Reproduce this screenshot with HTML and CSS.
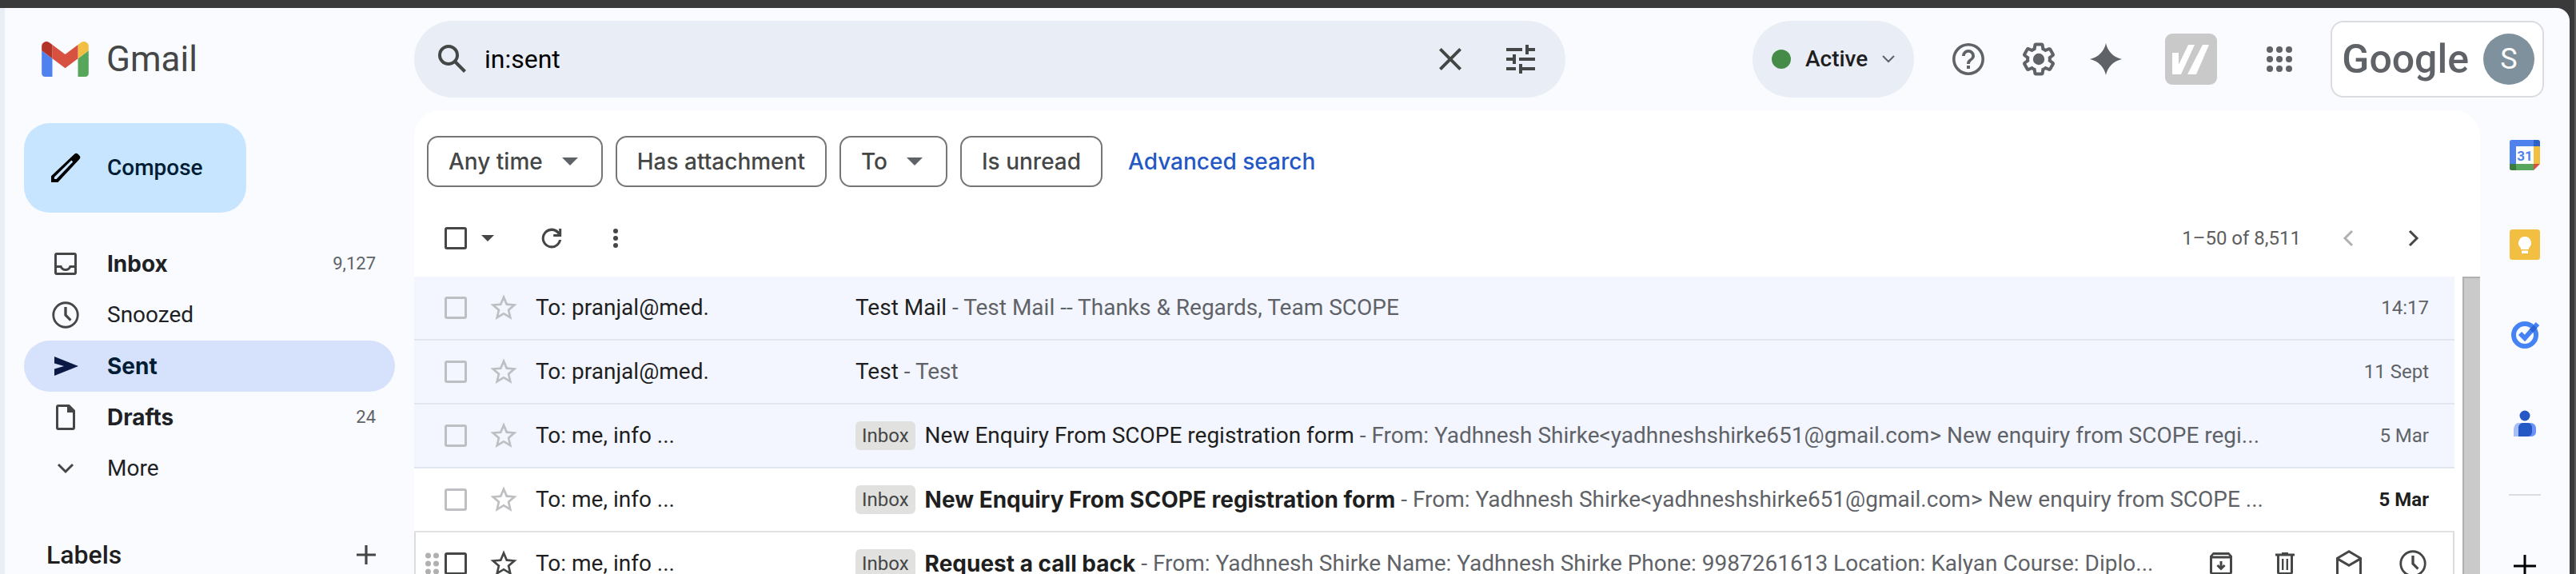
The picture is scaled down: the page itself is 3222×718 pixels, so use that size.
FILE: index.html
```html
<!DOCTYPE html>
<html lang="en">
<head>
<meta charset="utf-8">
<title>Gmail – Sent</title>
<link rel="stylesheet" href="styles.css">
</head>
<body>
<svg class="sprite" aria-hidden="true">
  <symbol id="star" viewBox="0 0 24 24"><path d="M22 9.24l-7.19-.62L12 2 9.19 8.63 2 9.24l5.46 4.73L5.82 21 12 17.27 18.18 21l-1.63-7.03L22 9.24zM12 15.4l-3.76 2.27 1-4.28-3.32-2.88 4.38-.38L12 6.1l1.71 4.04 4.38.38-3.32 2.88 1 4.28L12 15.4z"/></symbol>
  <symbol id="clock" viewBox="0 0 24 24"><path d="M12 2a10 10 0 1 0 0 20 10 10 0 0 0 0-20zm0 18.300a8.300 8.300 0 1 1 0-16.600 8.300 8.300 0 0 1 0 16.600zM13 6h-2v6.400l4.200 4.200 1.300-1.300-3.500-3.600z"/></symbol>
</svg>
<div class="app">
  <header class="header">
    <a class="brand" href="#" aria-label="Gmail">
      <svg class="brand-mark" viewBox="0 0 88 66"><path fill="#4f82ee" d="M6 66h14V32L0 17v43c0 3.300 2.700 6 6 6z"/><path fill="#58a55c" d="M68 66h14c3.300 0 6-2.700 6-6V17L68 32z"/><path fill="#f2bf42" d="M68 6v26l20-15V9c0-7.400-8.500-11.600-14.400-7.200z"/><path fill="#d85140" d="M20 32V6l24 18L68 6v26L44 50z"/><path fill="#b23428" d="M0 9v8l20 15V6l-5.600-4.200C8.500-2.600 0 1.600 0 9z"/></svg>
      <span>Gmail</span>
    </a>
    <form class="search">
      <button class="icon-btn" type="button" aria-label="Search"><svg class="i48" viewBox="0 0 24 24"><path d="M20.490 19l-5.730-5.730C15.530 12.200 16 10.910 16 9.500A6.500 6.500 0 1 0 9.500 16c1.410 0 2.700-.47 3.770-1.240L19 20.490 20.490 19zM5 9.500C5 7.010 7.010 5 9.500 5S14 7.010 14 9.500 11.990 14 9.500 14 5 11.990 5 9.500z"/></svg></button>
      <input class="search-input" type="text" aria-label="Search mail" value="in:sent">
      <button class="icon-btn" type="button" aria-label="Clear search"><svg class="i48" viewBox="0 0 24 24"><path d="M19 6.400L17.600 5 12 10.600 6.400 5 5 6.400l5.600 5.600L5 17.600 6.400 19l5.600-5.600 5.600 5.600 1.400-1.400-5.600-5.600z"/></svg></button>
      <button class="icon-btn" type="button" aria-label="Search options"><svg class="i48" viewBox="0 0 24 24"><path d="M3 17v2h6v-2H3zM3 5v2h10V5H3zm10 16v-2h8v-2h-8v-2h-2v6h2zM7 9v2H3v2h4v2h2V9H7zm14 4v-2H11v2h10zm-6-4h2V7h4V5h-4V3h-2v6z"/></svg></button>
    </form>
    <div class="header-tools">
      <button class="status" type="button"><span class="status-dot"></span>Active<svg class="i16" viewBox="0 0 16 10"><path class="line" d="M1 1l7 7 7-7"/></svg></button>
      <button class="icon-btn tool help" type="button" aria-label="Support"><svg class="i48" viewBox="0 0 24 24"><path d="M12 2a10 10 0 1 0 0 20 10 10 0 0 0 0-20zm0 18.200a8.200 8.200 0 1 1 0-16.400 8.200 8.200 0 0 1 0 16.400zM11 16h2v2h-2zM12 6a4 4 0 0 0-4 4h1.900a2.100 2.100 0 0 1 4.200 0c0 2-3.100 1.750-3.100 5H13c0-2.250 3-2.500 3-5a4 4 0 0 0-4-4z"/></svg></button>
      <button class="icon-btn tool" type="button" aria-label="Settings"><svg class="i48" viewBox="0 0 24 24"><path d="M13.850 22.250h-3.700c-.74 0-1.360-.54-1.450-1.270l-.27-1.890c-.27-.14-.53-.29-.79-.46l-1.800.720c-.7.260-1.470-.03-1.810-.65L2.200 15.530c-.35-.66-.2-1.440.36-1.880l1.530-1.190c-.01-.15-.02-.3-.02-.46 0-.15.010-.31.020-.46l-1.520-1.190c-.59-.45-.74-1.260-.37-1.880l1.850-3.190c.34-.62 1.110-.9 1.790-.63l1.810.730c.26-.17.520-.32.780-.46l.27-1.910c.09-.7.710-1.250 1.440-1.250h3.700c.74 0 1.360.540 1.450 1.270l.27 1.890c.27.140.530.290.790.460l1.800-.72c.71-.26 1.480.030 1.820.650l1.840 3.180c.36.660.2 1.440-.36 1.880l-1.520 1.190c.01.150.020.300.020.460s-.01.310-.02.460l1.520 1.190c.56.450.720 1.230.370 1.860l-1.860 3.220c-.34.620-1.110.900-1.800.630l-1.800-.72c-.26.170-.52.320-.78.460l-.27 1.910c-.1.680-.72 1.220-1.460 1.220zm-3.230-2h2.760l.37-2.550.53-.22c.44-.18.880-.44 1.340-.78l.45-.34 2.380.960 1.380-2.400-2.030-1.580.07-.56c.03-.26.060-.51.060-.78s-.03-.53-.06-.78l-.07-.56 2.030-1.580-1.390-2.400-2.390.960-.45-.35c-.42-.32-.87-.58-1.330-.77l-.52-.22-.37-2.550h-2.760l-.37 2.550-.53.210c-.44.190-.88.440-1.340.79l-.45.330-2.380-.95-1.390 2.390 2.030 1.580-.07.56a7 7 0 0 0-.06.790c0 .26.020.53.060.78l.07.56-2.030 1.580 1.380 2.400 2.390-.96.45.35c.43.330.860.580 1.330.770l.53.22z"/><circle cx="12" cy="12" r="3.600"/></svg></button>
      <button class="icon-btn tool gemini" type="button" aria-label="Gemini"><svg class="i48" viewBox="0 0 24 24"><path d="M12 2c1.100 5 4.500 8.800 10 10-5.500 1.200-8.900 5-10 10-1.100-5-4.500-8.800-10-10 5.500-1.200 8.900-5 10-10z"/></svg></button>
      <button class="icon-btn extension" type="button" aria-label="Extension"><svg class="i64" viewBox="0 0 65 64"><rect width="65" height="64" rx="9" fill="#c9c9c9"/><path fill="#fff" d="M9 24h8v15L29 14h8L20 51H9zM47 14h8L39 51H28z"/></svg></button>
      <button class="icon-btn tool" type="button" aria-label="Google apps"><svg class="i48" viewBox="0 0 24 24"><g><circle cx="6" cy="6" r="2"/><circle cx="12" cy="6" r="2"/><circle cx="18" cy="6" r="2"/><circle cx="6" cy="12" r="2"/><circle cx="12" cy="12" r="2"/><circle cx="18" cy="12" r="2"/><circle cx="6" cy="18" r="2"/><circle cx="12" cy="18" r="2"/><circle cx="18" cy="18" r="2"/></g></svg></button>
      <button class="account" type="button"><span class="google">Google</span><span class="avatar">S</span></button>
    </div>
  </header>

  <nav class="sidebar">
    <button class="compose" type="button"><svg class="i48" viewBox="0 0 24 24"><path fill="#000" d="M20.500 4.100l-.6-.6a1.800 1.800 0 0 0-2.500 0L3 17.100V21h4.200L20.500 6.700a1.800 1.800 0 0 0 0-2.600zM6.300 19H5v-1.300l10.700-10.400.9.900z"/></svg>Compose</button>
    <ul class="folders">
      <li><a class="folder strong" href="#"><svg class="i40" viewBox="0 0 20 20"><path d="M4.400 3h11.200c.8 0 1.400.6 1.400 1.400v11.200c0 .8-.6 1.400-1.400 1.400H4.400C3.600 17 3 16.400 3 15.600V4.400C3 3.600 3.600 3 4.400 3zm.1 9.500v3h11v-3h-2.100a3.900 3.900 0 0 1-6.800 0zm0-1.500h3.100c.3 1.200 1.200 2 2.400 2s2.100-.8 2.400-2h3.100V4.500h-11z"/></svg><span class="folder-name">Inbox</span><span class="count">9,127</span></a></li>
      <li><a class="folder" href="#"><svg class="i40"><use href="#clock"/></svg><span class="folder-name">Snoozed</span></a></li>
      <li><a class="folder strong current" href="#"><svg class="i40" viewBox="0 0 20 20"><path d="M3 4l15 6-15 6v-4.200L9 10 3 8.200z"/></svg><span class="folder-name">Sent</span></a></li>
      <li><a class="folder strong" href="#"><svg class="i40" viewBox="0 0 20 20"><path d="M5.400 2h7L16 5.600v11c0 .8-.6 1.400-1.400 1.400H5.400C4.600 18 4 17.400 4 16.600V3.400C4 2.600 4.600 2 5.400 2zm.1 1.500v13h9V7H11V3.500z"/></svg><span class="folder-name">Drafts</span><span class="count">24</span></a></li>
      <li><a class="folder" href="#"><svg class="i40" viewBox="0 0 20 20"><path class="line" d="M5.500 7.500L10 12l4.500-4.500"/></svg><span class="folder-name">More</span></a></li>
    </ul>
    <div class="labels"><h2>Labels</h2><button class="icon-btn" type="button" aria-label="Create new label"><svg class="i24" viewBox="0 0 12 12"><path d="M5.200 0h1.600v5.200H12v1.600H6.800V12H5.200V6.800H0V5.200h5.200z"/></svg></button></div>
  </nav>

  <main class="main">
    <div class="filters">
      <button class="chip" type="button">Any time<span class="caret"></span></button>
      <button class="chip" type="button">Has attachment</button>
      <button class="chip" type="button">To<span class="caret"></span></button>
      <button class="chip" type="button">Is unread</button>
      <a class="advanced" href="#">Advanced search</a>
    </div>
    <div class="toolbar">
      <input class="check dark" type="checkbox" aria-label="Select all">
      <button class="icon-btn select-menu" type="button" aria-label="Select"><span class="caret small"></span></button>
      <button class="icon-btn refresh" type="button" aria-label="Refresh"><svg class="i40" viewBox="0 0 20 20"><path d="M10 16.200A6.200 6.200 0 1 1 14.600 5.800V4h1.500v5h-5V7.500h2.700A4.600 4.600 0 1 0 14.500 11h1.600A6.200 6.200 0 0 1 10 16.200z"/></svg></button>
      <button class="icon-btn more" type="button" aria-label="More"><svg class="i40" viewBox="0 0 20 20"><circle cx="10" cy="5.500" r="1.500"/><circle cx="10" cy="10" r="1.500"/><circle cx="10" cy="14.500" r="1.500"/></svg></button>
      <span class="range">1–50 of 8,511</span>
      <button class="icon-btn pager off" type="button" aria-label="Newer" disabled><svg class="i40" viewBox="0 0 20 20"><path class="line" d="M12 5.500L7.500 10l4.500 4.500"/></svg></button>
      <button class="icon-btn pager" type="button" aria-label="Older"><svg class="i40" viewBox="0 0 20 20"><path class="line" d="M8 5.500l4.500 4.500L8 14.500"/></svg></button>
    </div>
    <div class="list">
      <table class="mails">
        <colgroup><col class="c-check"><col class="c-star"><col class="c-to"><col><col class="c-extra"><col class="c-date"></colgroup>
        <tbody>
          <tr class="read"><td class="cell-check"><input class="check" type="checkbox" aria-label="Select Test Mail"></td><td><button class="icon-btn star" type="button" aria-label="Star"><svg class="i40"><use href="#star"/></svg></button></td><td>To: pranjal@med.</td><td colspan="2"><div class="line-text"><span>Test Mail</span><span class="snippet">&nbsp;- Test Mail -- Thanks &amp; Regards, Team SCOPE</span></div></td><td class="date">14:17</td></tr>
          <tr class="read"><td class="cell-check"><input class="check" type="checkbox" aria-label="Select Test"></td><td><button class="icon-btn star" type="button" aria-label="Star"><svg class="i40"><use href="#star"/></svg></button></td><td>To: pranjal@med.</td><td colspan="2"><div class="line-text"><span>Test</span><span class="snippet">&nbsp;- Test</span></div></td><td class="date">11 Sept</td></tr>
          <tr class="read"><td class="cell-check"><input class="check" type="checkbox" aria-label="Select New Enquiry"></td><td><button class="icon-btn star" type="button" aria-label="Star"><svg class="i40"><use href="#star"/></svg></button></td><td>To: me, info ...</td><td colspan="2"><div class="line-text"><span class="tag">Inbox</span><span>New Enquiry From SCOPE registration form</span><span class="snippet">&nbsp;- From: Yadhnesh Shirke&lt;yadhneshshirke651@gmail.com&gt; New enquiry from SCOPE regi...</span></div></td><td class="date">5 Mar</td></tr>
          <tr class="unread"><td class="cell-check"><input class="check" type="checkbox" aria-label="Select New Enquiry"></td><td><button class="icon-btn star" type="button" aria-label="Star"><svg class="i40"><use href="#star"/></svg></button></td><td>To: me, info ...</td><td colspan="2"><div class="line-text"><span class="tag">Inbox</span><span class="subject">New Enquiry From SCOPE registration form</span><span class="snippet">&nbsp;- From: Yadhnesh Shirke&lt;yadhneshshirke651@gmail.com&gt; New enquiry from SCOPE ...</span></div></td><td class="date">5 Mar</td></tr>
          <tr class="unread hovered"><td class="cell-check"><div class="grip-check"><svg class="grip" viewBox="0 0 17 28"><circle cx="3.500" cy="4" r="3.500"/><circle cx="13.500" cy="4" r="3.500"/><circle cx="3.500" cy="14" r="3.500"/><circle cx="13.500" cy="14" r="3.500"/><circle cx="3.500" cy="24" r="3.500"/><circle cx="13.500" cy="24" r="3.500"/></svg><input class="check dark" type="checkbox" aria-label="Select Request a call back"></div></td><td><button class="icon-btn star dark" type="button" aria-label="Star"><svg class="i40"><use href="#star"/></svg></button></td><td>To: me, info ...</td><td><div class="line-text"><span class="tag">Inbox</span><span class="subject">Request a call back</span><span class="snippet">&nbsp;- From: Yadhnesh Shirke Name: Yadhnesh Shirke Phone: 9987261613 Location: Kalyan Course: Diplo...</span></div></td><td class="cell-actions" colspan="2"><div class="actions">
            <button class="icon-btn" type="button" aria-label="Archive"><svg class="i40" viewBox="0 0 20 20"><path d="M5 3h10l2 2.200v10.300c0 .8-.7 1.500-1.500 1.500h-11C3.700 17 3 16.300 3 15.500V5.200zm-.5 3.700v8.800h11V6.700zm.9-2.200l-.6.700h10.400l-.6-.700zM9.250 8.500h1.500v3l1-1 1.050 1.050L10 14.300l-2.800-2.750L8.250 10.500l1 1z"/></svg></button>
            <button class="icon-btn" type="button" aria-label="Delete"><svg class="i40" viewBox="0 0 20 20"><path d="M8 3h4v.7h4v1.600h-1V15.500c0 .8-.7 1.500-1.500 1.500h-7C5.700 17 5 16.300 5 15.500V5.300H4V3.700h4zM6.500 5.300v10.200h7V5.300zM8 7h1.200v7H8zm2.800 0H12v7h-1.200z"/></svg></button>
            <button class="icon-btn" type="button" aria-label="Mark as read"><svg class="i40" viewBox="0 0 20 20"><path d="M10 1.500l8 4.700v10.300c0 .8-.7 1.500-1.500 1.500h-13C2.700 18 2 17.300 2 16.500V6.200zm0 1.800L4 6.800l6 3.500 6-3.500zm0 8.700L3.500 8.200v8.300h13V8.200z"/></svg></button>
            <button class="icon-btn" type="button" aria-label="Snooze"><svg class="i40"><use href="#clock"/></svg></button>
          </div></td></tr>
        </tbody>
      </table>
      <div class="scrollbar"></div>
    </div>
  </main>

  <aside class="panel">
    <button class="icon-btn panel-btn" type="button" aria-label="Calendar"><svg class="i38" viewBox="0 0 38 38"><rect x="7" y="7" width="23" height="23" fill="#fff"/><path fill="#4f82ee" d="M2.500 0H30v8H8v22H0V2.500C0 1.100 1.100 0 2.500 0z"/><path fill="#2f62c9" d="M30 0h5.500C36.900 0 38 1.100 38 2.500V8h-8z"/><path fill="#f2bf42" d="M30 8h8v22h-8z"/><path fill="#58a55c" d="M8 30h22v8H8z"/><path fill="#3a7b3e" d="M0 30h8v8H2.500A2.500 2.500 0 0 1 0 35.500z"/><path fill="#d85140" d="M30 30h8l-8 8z"/><text class="cal-day" x="19" y="26" text-anchor="middle">31</text></svg></button>
    <button class="icon-btn panel-btn" type="button" aria-label="Keep"><svg class="i38" viewBox="0 0 38 38"><rect width="38" height="38" rx="3.500" fill="#f2bf42"/><path fill="#fff" d="M19 9a8 8 0 0 0-5 14.200V25h10v-1.800A8 8 0 0 0 19 9zm-4 17.500h8V30h-8z"/></svg></button>
    <button class="icon-btn panel-btn" type="button" aria-label="Tasks"><svg class="i38" viewBox="0 0 38 38"><circle cx="19" cy="20" r="14" fill="none" stroke="#4583f5" stroke-width="6"/><path fill="none" stroke="#4583f5" stroke-width="6" d="M13 18l6 6L35 6"/><path stroke="#2d66d4" stroke-width="6" d="M27 15l5-5.600"/></svg></button>
    <button class="icon-btn panel-btn" type="button" aria-label="Contacts"><svg class="i38" viewBox="0 0 38 38"><circle cx="19" cy="9" r="6.500" fill="#2458c5"/><path fill="#a9bef9" d="M11 18h12v17H5v-8c0-5 2.500-9 6-9z"/><path fill="#6a92f8" d="M18 18h8c4 0 7 3 7 7v4c0 3.500-2.500 6-6 6h-9z"/><path fill="#2458c5" d="M17 18h5c3.500 0 6 2.500 6 6v5c0 3.500-2.500 6-6 6H11V24c0-3.500 2.500-6 6-6z"/></svg></button>
    <hr class="panel-rule">
    <button class="icon-btn panel-btn add" type="button" aria-label="Get add-ons"><svg class="i28" viewBox="0 0 28 28"><path fill="#000" d="M12.500 0h3v12.500H28v3H15.500V28h-3V15.500H0v-3h12.500z"/></svg></button>
  </aside>
</div>
</body>
</html>
```
FILE: styles.css
```css
* { box-sizing: border-box; }

html { height: 100%; overflow: hidden; }

body {
  margin: 0;
  height: 100%;
  overflow: hidden;
  background: #3a3a3a;
  border-right: 2px solid #5a5a5a;
  padding: 10px 6px 0 0;
  font-family: Roboto, "Liberation Sans", sans-serif;
  font-size: 28px;
  line-height: 36px;
  color: #1f1f1f;
}

button, input { font: inherit; color: inherit; margin: 0; }
button { border: 0; padding: 0; background: none; white-space: nowrap; }
a { color: inherit; text-decoration: none; }
svg { display: block; flex: none; fill: currentColor; }
.sprite { position: absolute; width: 0; height: 0; }
.line { fill: none; stroke: currentColor; stroke-width: 1.500; }

.i16 { width: 16px; height: 10px; }
.i24 { width: 24px; height: 24px; }
.i28 { width: 28px; height: 28px; }
.i38 { width: 38px; height: 38px; }
.i40 { width: 40px; height: 40px; }
.i48 { width: 48px; height: 48px; }
.i64 { width: 65px; height: 64px; }
.icon-btn { display: flex; align-items: center; justify-content: center; flex: none; color: #444746; }

.app {
  height: 100%;
  display: grid;
  grid-template-columns: 512px minmax(0, 1fr) 112px;
  grid-template-rows: 128px minmax(0, 1fr);
  background: #f9fbff;
  border-left: 6px solid #e9eef6;
  border-top-right-radius: 16px;
  overflow: hidden;
}

/* Header */
.header {
  grid-column: 1 / -1;
  display: flex;
  align-items: center;
  padding-right: 32px;
}
.brand { width: 512px; flex: none; display: flex; align-items: center; gap: 22px; padding-left: 46px; font-size: 44px; line-height: 48px; color: #444746; }
.brand-mark { width: 59px; height: 44px; }
.search { width: 1440px; height: 96px; display: flex; align-items: center; gap: 16px; padding: 0 32px 0 24px; border-radius: 48px; background: #e9eef6; }
.search .icon-btn + .icon-btn { margin-left: 24px; }
.search-input { flex: 1; min-width: 0; border: 0; padding: 0; background: none; outline: 0; font-size: 32px; color: #000; }
.header-tools { flex: 1; display: flex; align-items: center; justify-content: flex-end; color: #5f6368; }
.tool { color: #5f6368; margin-left: 40px; }
.help { margin-left: 44px; }
.gemini { margin-left: 36px; }
.status { height: 96px; display: flex; align-items: center; gap: 18px; padding: 0 24px; border-radius: 48px; background: #e9eef6; color: #1f1f1f; font-weight: 500; }
.status-dot { width: 24px; height: 24px; border-radius: 50%; background: #458c48; }
.status svg { color: #5f6368; }
.status .line { stroke-width: 2; }
.extension { margin-left: 50px; }
.extension + .tool { margin-left: 54px; }
.account { height: 96px; margin-left: 40px; display: flex; align-items: center; gap: 18px; padding: 0 10px 0 12px; border: 2px solid #dadce0; border-radius: 16px; background: #fff; }
.google { font-size: 50px; line-height: 60px; font-weight: 500; color: #5f6368; }
.avatar { width: 64px; height: 64px; border-radius: 50%; background: #7e919d; color: #fff; font-size: 36px; line-height: 64px; }

/* Sidebar */
.sidebar { padding: 16px 24px 0; }
.compose { height: 112px; display: flex; align-items: center; gap: 28px; padding: 0 54px 0 28px; border-radius: 32px; background: #c8e5ff; color: #001d35; font-weight: 500; }
.folders { list-style: none; margin: 32px 0 0; padding: 0; }
.folder { height: 64px; display: flex; align-items: center; gap: 32px; padding: 0 24px 0 32px; border-radius: 32px; color: #202124; }
.folder svg { color: #444746; }
.folder-name { flex: 1; }
.strong .folder-name, .subject { font-family: Inter, Roboto, sans-serif; font-weight: 700; }
.count { font-size: 22px; color: #5f6368; }
.folder.current { background: #d6e2fb; color: #001d35; }
.current svg { color: #0b1a45; }
.labels { display: flex; align-items: center; justify-content: space-between; padding: 0 24px 0 28px; margin-top: 56px; }
.labels h2 { margin: 0; font-size: 32px; line-height: 40px; font-weight: 500; }

/* Message list */
.main { display: flex; flex-direction: column; background: #fff; border-radius: 32px 32px 0 0; overflow: hidden; }
.filters { display: flex; align-items: center; gap: 16px; padding: 32px 16px 16px; color: #444746; font-family: Inter, Roboto, sans-serif; font-weight: 500; }
.chip { height: 64px; display: flex; align-items: center; gap: 24px; padding: 0 25px; border: 2px solid #747775; border-radius: 14px; }
.chip:has(.caret) { padding-right: 29px; }
.caret { width: 0; height: 0; border: 10px solid transparent; border-bottom: 0; border-top-color: #5f6368; }
.caret.small { border-width: 8px 8px 0; border-top-color: #444746; }
.advanced { margin-left: 16px; color: #2458c5; }
.toolbar { height: 96px; display: flex; align-items: center; padding: 0 64px 0 38px; color: #5e5e5e; font-size: 24px; }
.check { display: block; appearance: none; flex: none; width: 28px; height: 28px; border: 3px solid #bdbfc2; border-radius: 3px; }
.check.dark { border-color: #444746; }
.select-menu { margin-left: 18px; }
.refresh { margin-left: 52px; }
.more { margin-left: 40px; }
.range { margin-left: auto; margin-right: 40px; }
.pager + .pager { margin-left: 40px; }
.off { color: #b0b1b1; }
.list { flex: 1; display: flex; align-items: stretch; min-height: 0; }
.mails { flex: 1; width: 0; table-layout: fixed; border-spacing: 0; align-self: flex-start; }
.c-check { width: 86px; }
.c-star { width: 66px; }
.c-to { width: 400px; }
.c-extra { width: 132px; }
.c-date { width: 200px; }
td { height: 80px; padding: 0; white-space: nowrap; border-bottom: 2px solid #e1e1e1; }
.read td { background: #f3f6fe; border-color: #e1e5ee; }
.cell-check { padding-left: 38px; }
.star { color: #bdbfc2; margin-left: 6px; }
.star.dark { color: #444746; }
.line-text { display: flex; align-items: center; }
.snippet { color: #5f6368; }
.tag { height: 36px; padding: 0 8px; margin-right: 12px; border-radius: 6px; background: #e1e1e0; color: #444746; font-size: 24px; }
.date { padding-right: 32px; text-align: right; font-size: 24px; color: #5f6368; }
.unread .date { font-weight: 700; color: #1f1f1f; }
.hovered .cell-check { padding-left: 12px; border-left: 2px solid #dadce0; }
.grip-check { display: flex; align-items: center; gap: 7px; }
.grip { width: 17px; height: 28px; color: #b0b0b0; }
.cell-actions { border-right: 2px solid #dadce0; }
.actions { display: flex; gap: 40px; padding-left: 20px; }
.scrollbar { width: 22px; margin-left: 10px; background: #cacaca; border: 2px solid #b0b0b0; border-width: 2px 0 0 2px; }

/* Side panel */
.panel { display: flex; flex-direction: column; align-items: center; overflow: hidden; }
.panel-btn { height: 112px; }
.panel-btn.add { height: auto; margin-top: 42px; }
.cal-day { font-size: 17px; font-weight: 700; fill: #4f82ee; }
.panel-rule { width: 40px; height: 2px; flex: none; margin: 32px 0; border: 0; background: #dadce0; }
```
